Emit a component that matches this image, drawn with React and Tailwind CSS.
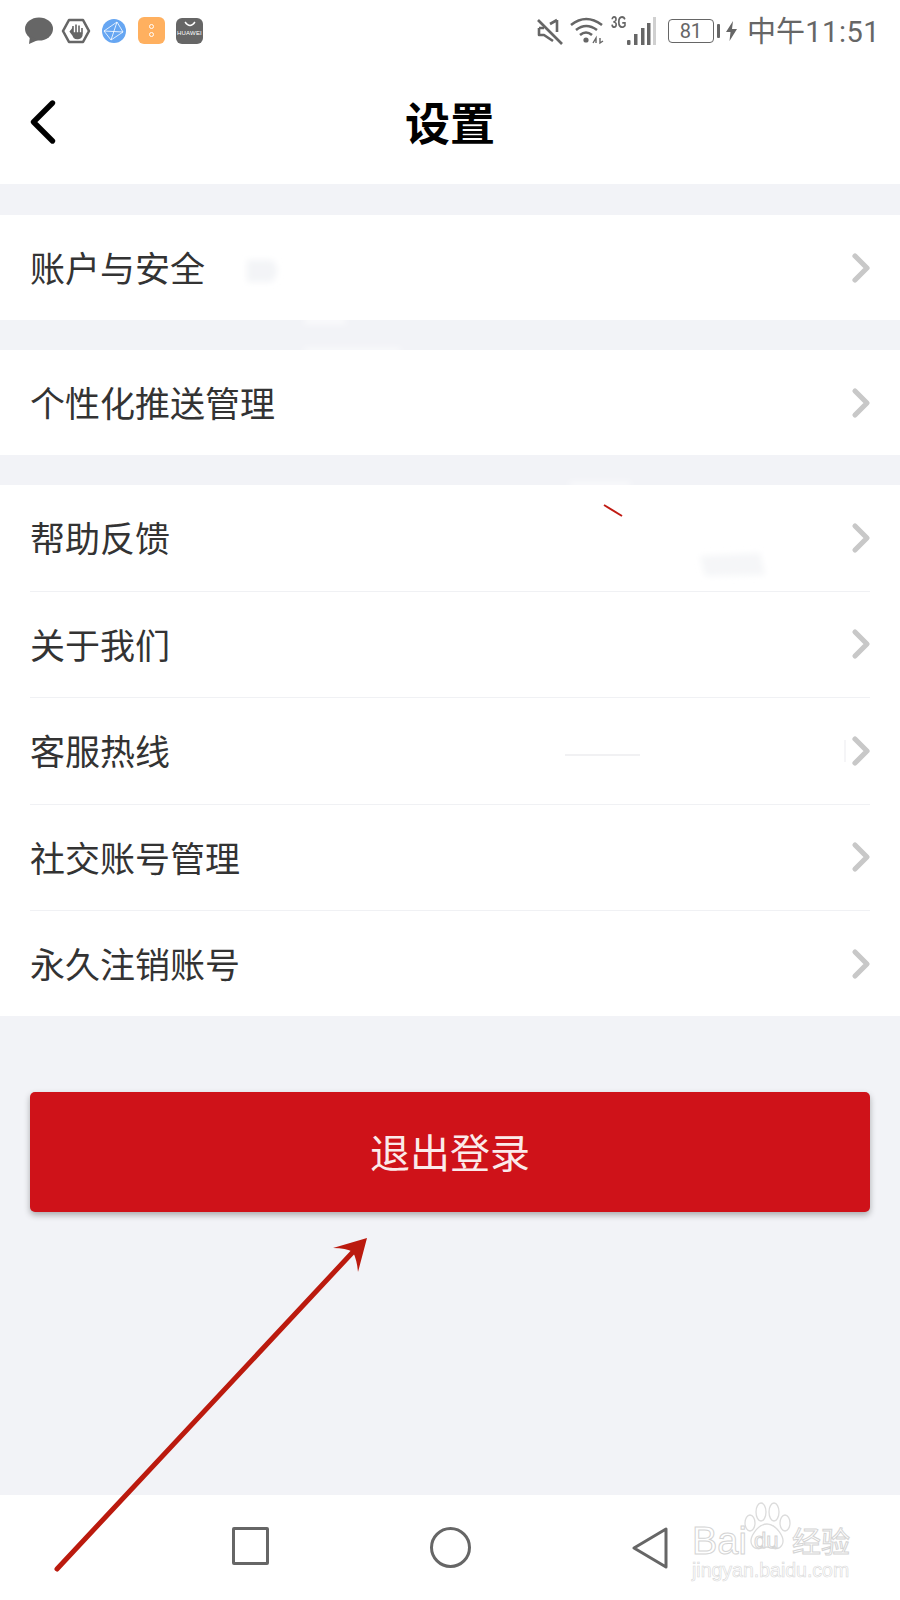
import { ChevronLeft, ChevronRight } from 'lucide-react';

const cjk = 'font-["Noto_Sans_CJK_SC","Noto_Sans",sans-serif]';

function Row({ label, divider }) {
  return (
    <div className={`flex items-center justify-between ${divider ? 'h-[106.5px] border-b border-[#f0f1f4]' : 'h-[105px]'}`}>
      <span className="pb-[2px] text-[35px] leading-none text-[#333333]">{label}</span>
      <ChevronRight className="mr-[-15px] h-[48px] w-[48px] text-[#c8c8c8]" strokeWidth={2.6} />
    </div>
  );
}

function LeftIcons() {
  return (
    <div className="flex items-center">
      {/* message bubble */}
      <svg width="30" height="28" viewBox="0 0 30 28" className="ml-[24px]">
        <ellipse cx="15" cy="12" rx="14" ry="11.5" fill="#666666" />
        <path d="M6 19 L5 27 L14 23 Z" fill="#666666" />
      </svg>
      {/* hand in hexagon */}
      <svg width="30" height="26" viewBox="0 0 30 26" className="ml-[7px]">
        <path d="M8 2 H22 L28 13 L22 24 H8 L2 13 Z" fill="none" stroke="#666666" strokeWidth="2.6" strokeLinejoin="round" />
        <path d="M9 13 L12 17 V9 M12 8 V16 M15 6.5 V16 M18 7.5 V16 M21 10 V16 M12 15 Q12 21 17 20.5 Q21 20 21 15 Z" fill="#666666" stroke="#666666" strokeWidth="1.6" />
      </svg>
      {/* globe */}
      <svg width="24" height="24" viewBox="0 0 24 24" className="ml-[11px]">
        <circle cx="12" cy="12" r="12" fill="#66a6f2" />
        <path d="M2 12 L15 3 L21 13 L9 21 Z M15 3 L9 21 M2 12 L21 13" fill="none" stroke="#ffffff" strokeWidth="0.8" />
      </svg>
      {/* orange app */}
      <div className="ml-[12px] flex h-[27px] w-[27px] flex-col items-center justify-center gap-[3px] rounded-[6px] bg-[#ffb05f]">
        <span className="h-[5px] w-[5px] rounded-full border border-white" />
        <span className="h-[5px] w-[5px] rounded-full border border-white" />
      </div>
      {/* huawei app gallery */}
      <div className="ml-[11px] flex h-[26px] w-[27px] flex-col items-center rounded-[6px] bg-[#666666] pt-[3px]">
        <svg width="14" height="7" viewBox="0 0 14 7">
          <path d="M2 1 Q7 8 12 1" fill="none" stroke="#ffffff" strokeWidth="1.3" />
        </svg>
        <span className="mt-[2px] font-['Liberation_Sans',sans-serif] text-[6px] leading-none tracking-[0.2px] text-white">HUAWEI</span>
      </div>
    </div>
  );
}

function RightIcons() {
  return (
    <div className="flex items-center text-[#666666]">
      {/* muted speaker */}
      <svg width="28" height="28" viewBox="0 0 28 28">
        <path d="M3 11 H8 M3 11 V18 H8 L17 24 M21 3 L14 7 M21 3 V15" fill="none" stroke="#666666" strokeWidth="2.6" strokeLinejoin="round" />
        <path d="M2 3 L26 27" stroke="#666666" strokeWidth="2.6" />
      </svg>
      {/* wifi */}
      <svg width="34" height="28" viewBox="0 0 34 28" className="ml-[6px]">
        <path d="M1 8 Q16 -4 32 8 M6 13 Q16 5 27 13 M10 18 Q16 13 22 18" fill="none" stroke="#666666" strokeWidth="2.6" />
        <circle cx="16" cy="23" r="2.6" fill="#666666" />
        <path d="M23 26 L26 21 V26 M30 21 V26 L33 24" fill="none" stroke="#666666" strokeWidth="1.4" />
      </svg>
      <div className="relative ml-[7px] h-[30px] w-[44px]">
        <span className="absolute left-0 top-[-1px] origin-left font-['Liberation_Sans',sans-serif] text-[16px] font-bold leading-[16px] [transform:scaleX(0.72)]">3G</span>
        {/* signal bars */}
        <svg width="30" height="28" viewBox="0 0 30 28" className="absolute right-[-1px] top-[1px]">
          <rect x="1" y="23" width="3.5" height="5" rx="1" fill="#666666" />
          <rect x="8" y="17" width="3.5" height="11" fill="#666666" />
          <rect x="15" y="11" width="3.5" height="17" fill="#666666" />
          <rect x="21" y="6" width="3.5" height="22" fill="#666666" />
          <rect x="27" y="0" width="3" height="28" fill="#d0d0d0" />
        </svg>
      </div>
      {/* battery */}
      <div className="ml-[13px] flex h-[24px] w-[46px] items-center justify-center rounded-[4px] border border-[#666666] font-['Roboto',sans-serif] text-[20px] leading-none">81</div>
      <span className="ml-[3px] h-[14px] w-[3px] rounded-[1px] bg-[#666666]" />
      <svg width="11" height="20" viewBox="0 0 11 20" className="ml-[6px]">
        <path d="M7 0 L0 11 H4.5 L3.5 20 L11 8 H6 Z" fill="#666666" />
      </svg>
      <span className="ml-[10px] text-[29px] leading-none tracking-[0.2px]">
        中午<span className="font-['Roboto',sans-serif] tracking-[0.5px]">11:51</span>
      </span>
    </div>
  );
}

function NavBar() {
  return (
    <div className="flex h-[105px] items-start justify-center bg-white pt-[32px]">
      <div className="flex w-[200px] justify-center">
        <div className="h-[38px] w-[37px] rounded-[2px] border-[3px] border-[#666666]" />
      </div>
      <div className="flex w-[200px] justify-center">
        <div className="h-[41px] w-[41px] rounded-full border-[3px] border-[#666666]" />
      </div>
      <div className="flex w-[200px] justify-center">
        <svg width="36" height="42" viewBox="0 0 36 42">
          <path d="M34 2 V40 L2 21 Z" fill="none" stroke="#666666" strokeWidth="3" strokeLinejoin="round" />
        </svg>
      </div>
    </div>
  );
}

function Watermark() {
  const outline = 'text-white [-webkit-text-stroke:1px_#d4d4d4]';
  return (
    <div className="absolute left-[690px] top-[1500px] h-[84px] w-[165px]">
      <svg width="50" height="50" viewBox="0 0 50 50" className="absolute left-[52px] top-[2px]">
        <g fill="none" stroke="#dcdcdc" strokeWidth="1.3">
          <ellipse cx="8" cy="21" rx="5" ry="8" />
          <ellipse cx="19" cy="10" rx="5" ry="9" />
          <ellipse cx="32" cy="10" rx="5" ry="9" />
          <ellipse cx="43" cy="21" rx="5" ry="8" />
          <path d="M25 22 C16 22 6 36 10 43 C14 50 22 45 25 45 C28 45 36 50 40 43 C44 36 34 22 25 22 Z" />
        </g>
      </svg>
      <span className={`absolute left-[2px] top-[22px] font-['Liberation_Sans',sans-serif] text-[38px] leading-none ${outline}`}>Bai</span>
      <span className={`absolute left-[64px] top-[30px] font-['Liberation_Sans',sans-serif] text-[22px] leading-none ${outline}`}>du</span>
      <span className={`absolute left-[102px] top-[26px] text-[29px] leading-none ${outline}`}>经验</span>
      <span className="absolute left-[2px] top-[61px] whitespace-nowrap font-['Liberation_Sans',sans-serif] text-[19.5px] leading-none text-white [-webkit-text-stroke:0.6px_#d8d8d8]">jingyan.baidu.com</span>
    </div>
  );
}

export default function App() {
  return (
    <div className={`relative flex h-[1600px] w-[900px] flex-col overflow-hidden bg-[#f2f3f7] ${cjk}`}>
      {/* Header */}
      <div className="bg-white">
        <div className="flex h-[61px] items-center justify-between pr-[20px]">
          <LeftIcons />
          <RightIcons />
        </div>
        <div className="relative flex h-[123px] items-center justify-center">
          <ChevronLeft className="absolute left-[5px] top-[23px] h-[76px] w-[76px] text-black" strokeWidth={1.7} />
          <h1 className="pb-[2px] text-[45px] font-bold leading-none text-black">设置</h1>
        </div>
      </div>

      {/* Lists */}
      <div className="mt-[31px] bg-white px-[30px]">
        <Row label="账户与安全" />
      </div>
      <div className="mt-[30px] bg-white px-[30px]">
        <Row label="个性化推送管理" />
      </div>
      <div className="mt-[30px] bg-white px-[30px]">
        <Row label="帮助反馈" divider />
        <Row label="关于我们" divider />
        <Row label="客服热线" divider />
        <Row label="社交账号管理" divider />
        <Row label="永久注销账号" />
      </div>

      {/* Logout */}
      <div className="mt-[76px] px-[30px]">
        <button className="flex h-[120px] w-full items-center justify-center rounded-[5px] bg-[#cf1219] pb-[2px] text-[40px] text-[#fbeaea] shadow-[0_3px_6px_rgba(0,0,0,0.3)]">
          退出登录
        </button>
      </div>

      <div className="mt-auto">
        <NavBar />
      </div>

      {/* Annotation arrow and leftover edit marks */}
      <svg width="900" height="1600" viewBox="0 0 900 1600" className="absolute left-0 top-0">
        <defs>
          <filter id="soft"><feGaussianBlur stdDeviation="3" /></filter>
        </defs>
        <g filter="url(#soft)">
          <path d="M247 260 H272 Q282 270 272 282 H247 Z" fill="#f3f4f7" />
          <rect x="305" y="319" width="40" height="4" fill="#ffffff" />
          <rect x="305" y="349" width="95" height="3" fill="#ffffff" />
          <rect x="570" y="483" width="60" height="3" fill="#ffffff" />
          <path d="M700 556 L760 553 L765 575 L705 576 Z" fill="#f5f6f8" />
        </g>
        <path d="M604 505 L622 516" stroke="#c01a12" strokeWidth="2" />
        <path d="M565 755 H640" stroke="#ececef" strokeWidth="1.5" />
        <path d="M845 740 V762" stroke="#f2f2f4" strokeWidth="1.5" />
        <path d="M57 1569 L352 1253" stroke="#bb1a0e" strokeWidth="5" strokeLinecap="round" />
        <path d="M367 1238 L333 1248 Q346 1248 353 1252 Q357 1260 358 1272 Z" fill="#bb1a0e" />
      </svg>

      <Watermark />
    </div>
  );
}
